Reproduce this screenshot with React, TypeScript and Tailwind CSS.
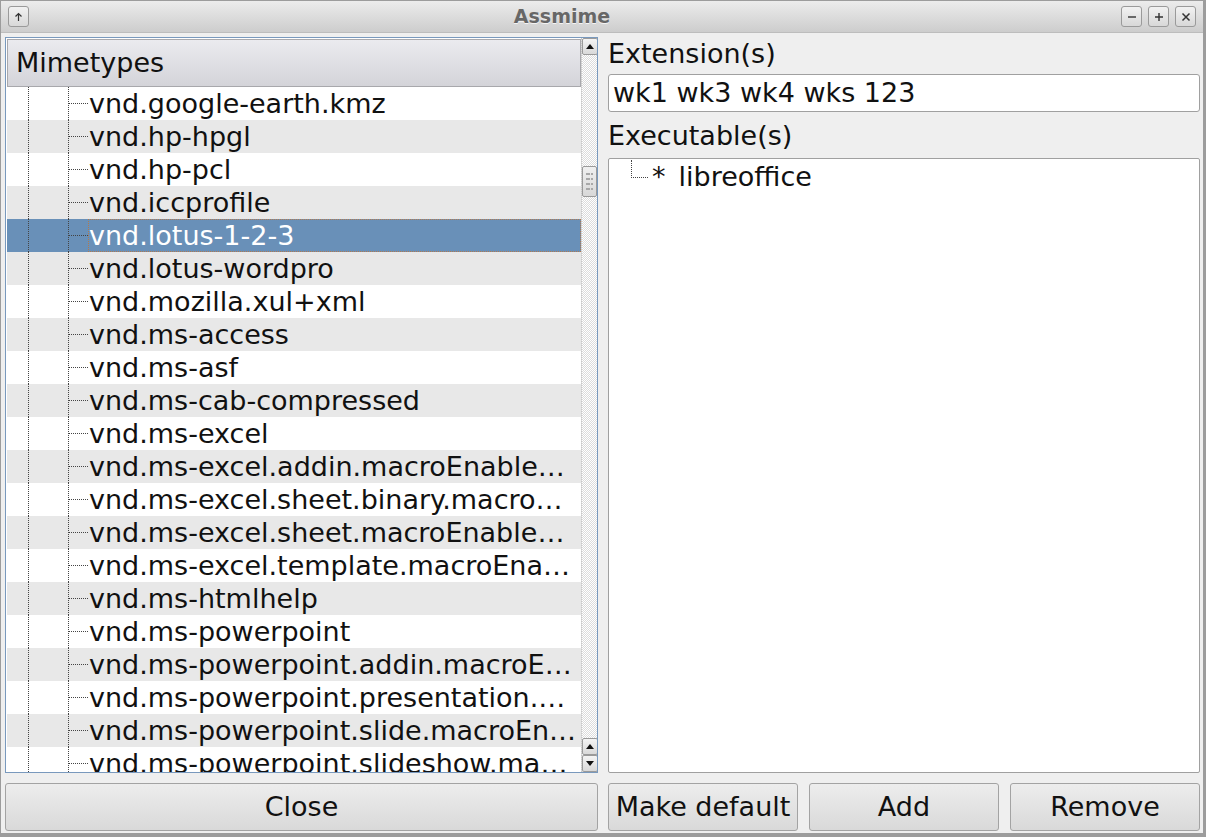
import { clsx } from 'clsx';

const mimetypes = [
    'vnd.google-earth.kmz',
    'vnd.hp-hpgl',
    'vnd.hp-pcl',
    'vnd.iccprofile',
    'vnd.lotus-1-2-3',
    'vnd.lotus-wordpro',
    'vnd.mozilla.xul+xml',
    'vnd.ms-access',
    'vnd.ms-asf',
    'vnd.ms-cab-compressed',
    'vnd.ms-excel',
    'vnd.ms-excel.addin.macroEnabled.12',
    'vnd.ms-excel.sheet.binary.macroEnabled.12',
    'vnd.ms-excel.sheet.macroEnabled.12',
    'vnd.ms-excel.template.macroEnabled.12',
    'vnd.ms-htmlhelp',
    'vnd.ms-powerpoint',
    'vnd.ms-powerpoint.addin.macroEnabled.12',
    'vnd.ms-powerpoint.presentation.macroEnabled.12',
    'vnd.ms-powerpoint.slide.macroEnabled.12',
    'vnd.ms-powerpoint.slideshow.macroEnabled.12',
];

const SELECTED = 4;

const btn =
    'flex items-center justify-center rounded-[3px] border border-[#a3a3a3] bg-gradient-to-b from-[#ededed] to-[#d9d9d9] text-[27px] text-[#111]';

const TitleButton = ({ children }: { children: React.ReactNode }) => (
    <div className="w-[21px] h-[21px] rounded-[3px] border border-[#9a9a9a] bg-gradient-to-b from-[#f2f2f2] to-[#d8d8d8] flex items-center justify-center text-[#444]">
        {children}
    </div>
);

const ScrollButton = ({ up }: { up?: boolean }) => (
    <div className="w-[16px] h-[17px] shrink-0 rounded-[2px] border border-[#9a9a9a] bg-gradient-to-b from-[#f4f4f4] to-[#d9d9d9] flex items-center justify-center">
        <svg width="8" height="5" viewBox="0 0 8 5">
            {up ? <path d="M0 5 L4 0 L8 5 Z" fill="#111" /> : <path d="M0 0 L4 5 L8 0 Z" fill="#111" />}
        </svg>
    </div>
);

export default function App() {
    return (
        <div
            className="w-[1206px] h-[837px] flex flex-col bg-[#efefef] border-l border-t border-r-[3px] border-b-[4px] border-[#9c9c9c] overflow-hidden"
            style={{ fontFamily: '"DejaVu Sans", "Liberation Sans", sans-serif' }}
        >
            {/* title bar */}
            <div className="h-[32px] shrink-0 flex items-center px-[7px] bg-gradient-to-b from-[#ececec] to-[#cdcdcd] border-b border-[#bdbdbd]">
                <TitleButton>
                    <svg width="9" height="10" viewBox="0 0 9 10">
                        <path d="M4.5 9 V1.5 M1.5 4.5 L4.5 1.5 L7.5 4.5" stroke="#333" strokeWidth="1.2" fill="none" />
                    </svg>
                </TitleButton>
                <div className="flex-1 text-center text-[19px] font-bold text-[#676767] mr-[26px] [text-shadow:0_1px_0_#f4f4f4]">
                    Assmime
                </div>
                <div className="flex gap-[6px]">
                    <TitleButton>
                        <svg width="10" height="10" viewBox="0 0 10 10">
                            <path d="M1 5 H9" stroke="#333" strokeWidth="1.4" />
                        </svg>
                    </TitleButton>
                    <TitleButton>
                        <svg width="10" height="10" viewBox="0 0 10 10">
                            <path d="M1 5 H9 M5 1 V9" stroke="#333" strokeWidth="1.4" />
                        </svg>
                    </TitleButton>
                    <TitleButton>
                        <svg width="10" height="10" viewBox="0 0 10 10">
                            <path d="M1.5 1.5 L8.5 8.5 M8.5 1.5 L1.5 8.5" stroke="#333" strokeWidth="1.5" />
                        </svg>
                    </TitleButton>
                </div>
            </div>

            <div className="flex-1 min-h-0 flex flex-col pt-[4px] pl-[4px] pr-[3px] pb-[2px] text-[#111]">
                <div className="flex-1 flex gap-[10px] min-h-0">
                    {/* mimetype tree */}
                    <div className="w-[593px] flex border border-[#7999bd] bg-white overflow-hidden">
                        <div className="flex-1 flex flex-col min-w-0 min-h-0 pl-[1px] pt-[1px]">
                            <div className="h-[48px] shrink-0 flex items-center pl-[8px] text-[27px] bg-gradient-to-b from-[#ebebef] to-[#d4d4d9] border border-[#a8a8ac]">
                                Mimetypes
                            </div>
                            <div className="flex-1 min-h-0 overflow-hidden">
                                {mimetypes.map((m, i) => (
                                    <div
                                        key={m}
                                        className={clsx(
                                            'h-[33px] flex items-stretch text-[27px] leading-[33px]',
                                            i === SELECTED ? 'bg-[#6990b8] text-white' : i % 2 ? 'bg-[#e8e8e8]' : 'bg-white'
                                        )}
                                    >
                                        <div className="w-[21px] shrink-0" />
                                        <div className="w-[40px] shrink-0 border-l border-dotted border-[#444]" />
                                        <div className="w-[20px] shrink-0 border-l border-dotted border-[#444] flex items-center">
                                            <div className="w-full border-t border-dotted border-[#444]" />
                                        </div>
                                        <div
                                            className={clsx(
                                                'flex-1 min-w-0 pl-[1px] pr-[3px] whitespace-nowrap overflow-hidden text-ellipsis',
                                                i === SELECTED && 'outline outline-1 outline-dotted outline-[#b07a50] -outline-offset-1'
                                            )}
                                        >
                                            {m}
                                        </div>
                                    </div>
                                ))}
                            </div>
                        </div>
                        {/* scrollbar */}
                        <div className="w-[16px] shrink-0 flex flex-col bg-[repeating-conic-gradient(#dcdcdc_0_25%,#ffffff_0_50%)] bg-[length:2px_2px] border-l border-dotted border-[#c8c8c8]">
                            <ScrollButton up />
                            <div className="h-[111px] shrink-0" />
                            <div className="h-[31px] shrink-0 rounded-[2px] border border-[#9a9a9a] bg-gradient-to-b from-[#f0f0f0] to-[#d8d8d8] grid grid-cols-3 content-center justify-items-center gap-y-[3px] px-[3px]">
                                {Array.from({ length: 12 }).map((_, k) => (
                                    <div key={k} className="w-[2px] h-[2px] bg-[#a8a8a8]" />
                                ))}
                            </div>
                            <div className="flex-1" />
                            <ScrollButton up />
                            <ScrollButton />
                        </div>
                    </div>

                    {/* right side */}
                    <div className="flex-1 flex flex-col min-w-0 min-h-0">
                        <div className="h-[37px] shrink-0 flex items-center text-[27px] pb-[2px]">Extension(s)</div>
                        <div className="h-[38px] shrink-0 flex items-center px-[4px] text-[27px] bg-white border border-[#a0a0a0] rounded-[3px]">
                            wk1 wk3 wk4 wks 123
                        </div>
                        <div className="h-[46px] shrink-0 flex items-center text-[27px] pt-[2px]">Executable(s)</div>
                        <div className="flex-1 min-h-0 bg-white border border-[#a0a0a0] rounded-[2px] pt-[1px]">
                            <div className="h-[33px] flex items-stretch text-[27px] leading-[33px]">
                                <div className="w-[22px] shrink-0" />
                                <div className="w-[17px] shrink-0 h-[18px] border-l border-b border-dotted border-[#444]" />
                                <div className="pl-[4px] flex gap-[13px]">
                                    <span>*</span>
                                    <span>libreoffice</span>
                                </div>
                            </div>
                        </div>
                    </div>
                </div>

                {/* buttons */}
                <div className="h-[48px] shrink-0 mt-[10px] flex gap-[10px]">
                    <div className={clsx(btn, 'w-[593px]')}>Close</div>
                    <div className="flex-1 flex gap-[11px]">
                        <div className={clsx(btn, 'flex-1')}>Make default</div>
                        <div className={clsx(btn, 'flex-1')}>Add</div>
                        <div className={clsx(btn, 'flex-1')}>Remove</div>
                    </div>
                </div>
            </div>
        </div>
    );
}
